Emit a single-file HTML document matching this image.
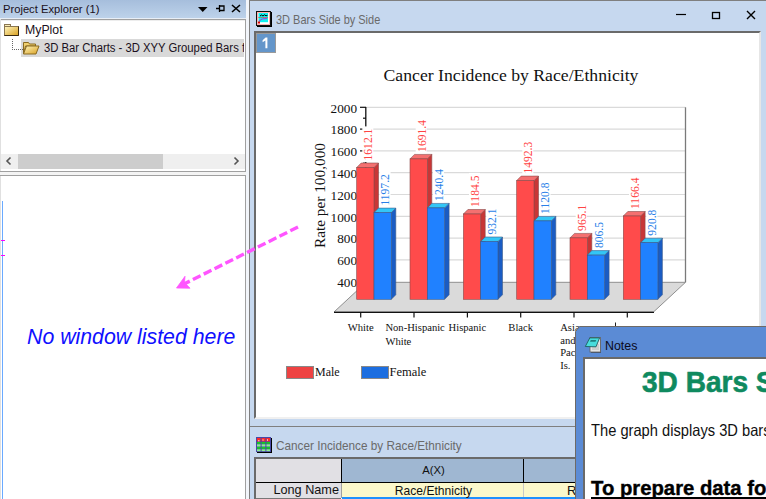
<!DOCTYPE html>
<html><head><meta charset="utf-8">
<style>
*{margin:0;padding:0;box-sizing:border-box}
html,body{width:766px;height:499px;overflow:hidden;background:#fff;font-family:"Liberation Sans",sans-serif;}
.abs{position:absolute}
#pe-title{left:0;top:0;width:246px;height:18px;background:linear-gradient(#a6bedc,#bdd2ea);}
#pe-title span{position:absolute;left:3px;top:3px;font-size:11.2px;color:#1a1020;white-space:nowrap}
.tree{font-size:11.3px;color:#1a1020;white-space:nowrap}
.tl{font-family:"Liberation Serif",serif;font-size:12.5px;fill:#111}
.vl{font-family:"Liberation Serif",serif;font-size:11.6px}
.cl{font-family:"Liberation Serif",serif;font-size:10.6px;fill:#111}
</style></head><body>
<!-- left panel -->
<div class="abs" style="left:0;top:0;width:246px;height:499px;background:#fff"></div>
<div class="abs" id="pe-title"><span>Project Explorer (1)</span></div>
<div class="abs" style="left:0;top:18px;width:246px;height:1px;background:#e8eef6"></div>
<div class="abs" style="left:0;top:19px;width:246px;height:1px;background:#a0a0a0"></div>
<div class="abs" style="left:0;top:20px;width:245px;height:1px;background:#ededed"></div>
<div class="abs" style="left:0;top:19px;width:1px;height:152px;background:#e0e0e0"></div>
<div class="abs" style="left:245px;top:19px;width:1px;height:480px;background:#a0a0a0"></div>
<!-- tree -->
<div class="abs" style="left:21px;top:39px;width:223px;height:18px;background:#d9d9d9"></div>
<div class="abs tree" style="left:25px;top:23px;font-size:12.3px">MyPlot</div>
<div class="abs" style="left:21px;top:39px;width:223px;height:18px;overflow:hidden"><div class="tree" style="position:absolute;left:23px;top:2px;font-size:12px;transform:scaleX(0.94);transform-origin:0 0">3D Bar Charts - 3D XYY Grouped Bars for Ethnicity</div></div>
<svg class="abs" style="left:0;top:0" width="60" height="60">
 <line x1="12.5" y1="39" x2="12.5" y2="50" stroke="#666" stroke-dasharray="1 1"/>
 <line x1="12" y1="49.5" x2="23" y2="49.5" stroke="#666" stroke-dasharray="1 1"/>
 <defs><linearGradient id="fg" x1="0" y1="0" x2="1" y2="1"><stop offset="0" stop-color="#fff6c0"/><stop offset="1" stop-color="#d9a020"/></linearGradient></defs>
 <rect x="4.5" y="24.5" width="6" height="2" fill="#fbeeb8" stroke="#8a7650" stroke-width="1"/><rect x="4.5" y="26.5" width="14" height="9" fill="url(#fg)" stroke="#8a7650" stroke-width="1"/><path d="M4.5,35.5 h14 v-9" fill="none" stroke="#3a2a10" stroke-width="1"/>
 <path d="M23.5,42.5 h5 l1,1.5 h6 v2 h-10 l-2,8 z" fill="#f0d070" stroke="#8a6a20" stroke-width="1"/>
 <path d="M26.5,46 h12.5 l-3,8 h-12.5z" fill="url(#fg)" stroke="#8a6a20" stroke-width="1"/>
</svg>
<!-- scrollbar -->
<div class="abs" style="left:1px;top:154px;width:244px;height:15px;background:#efefef"></div>
<div class="abs" style="left:18px;top:154px;width:145px;height:15px;background:#cdcdcd"></div>
<svg class="abs" style="left:0;top:150px" width="246" height="25">
 <path d="M10.5,7.5 l-3.5,3.5 l3.5,3.5" fill="none" stroke="#555" stroke-width="1.6"/>
 <path d="M234.5,7.5 l3.5,3.5 l-3.5,3.5" fill="none" stroke="#555" stroke-width="1.6"/>
</svg>
<div class="abs" style="left:0;top:171px;width:246px;height:1px;background:#a0a0a0"></div>
<div class="abs" style="left:0;top:172px;width:246px;height:3px;background:#f4f4f4"></div>
<div class="abs" style="left:0;top:175px;width:246px;height:1px;background:#a0a0a0"></div>
<div class="abs" style="left:0;top:176px;width:1px;height:323px;background:#e0e0e0"></div>
<div class="abs" style="left:2px;top:201px;width:1px;height:298px;background:#6aaaff"></div>
<div class="abs" style="left:1px;top:240px;width:4px;height:1px;background:#ff00ff"></div>
<div class="abs" style="left:1px;top:255px;width:4px;height:1px;background:#ff00ff"></div>
<div class="abs" style="left:27px;top:325px;font-size:21.3px;font-style:italic;color:#1010ff;white-space:nowrap">No window listed here</div>
<!-- title icons -->
<svg class="abs" style="left:190px;top:0" width="56" height="18">
 <path d="M8,7 h9.5 l-4.75,5z" fill="#000"/>
 <path d="M26,8.5 h4 M29.5,5 v7 M29.5,6 h4.5 v4.5 h-4.5" fill="none" stroke="#000" stroke-width="1.3"/>
 <path d="M42,5 l8,7 M50,5 l-8,7" stroke="#000" stroke-width="1.6"/>
</svg>
<!-- splitter -->
<div class="abs" style="left:246px;top:0;width:3px;height:499px;background:#f2f5fa"></div>
<!-- graph window -->
<div class="abs" style="left:249px;top:0;width:517px;height:427px;background:#c6d8ef;border-left:1px solid #7f7f7f;border-top:1px solid #7f7f7f;border-bottom:1px solid #7f7f7f"></div>
<div class="abs" style="left:276px;top:12.7px;font-size:12.2px;color:#6a6a6a;white-space:nowrap;transform:scaleX(0.9);transform-origin:0 0">3D Bars Side by Side</div>
<svg class="abs" style="left:255px;top:10px" width="18" height="18">
 <rect x="2" y="2" width="15" height="15" fill="#000"/>
 <rect x="1.5" y="1.5" width="14" height="14" fill="#fff" stroke="#111"/>
 <rect x="2.5" y="2.5" width="12" height="12" fill="none" stroke="#ff6060" stroke-dasharray="1 1"/>
 <rect x="3.5" y="3" width="9.5" height="9.2" fill="#10f0f0"/>
 <path d="M5,6 l1.5,-1 l1.5,1 l1.5,-1.2 l1.5,1 l1.5,-0.5" stroke="#000" fill="none" stroke-width="1"/>
 <path d="M3.5,7.5 h9.5" stroke="#e04040" stroke-dasharray="1.2 0.8"/>
 <path d="M4,11 q3,-3 8,-2.5" stroke="#b030e0" fill="none" stroke-width="1"/>
 <rect x="3" y="11.5" width="2" height="2" fill="#e00000"/>
</svg>
<svg class="abs" style="left:670px;top:5px" width="96" height="22">
 <path d="M6,9.5 h10" stroke="#000" stroke-width="1.2"/>
 <rect x="42.5" y="7.5" width="7" height="6" fill="none" stroke="#000" stroke-width="1.3"/>
 <path d="M77,6 l8,8 M85,6 l-8,8" stroke="#000" stroke-width="1.4"/>
</svg>
<div class="abs" style="left:254px;top:31px;width:507px;height:388px;border-left:2px solid #6a6a6a;border-top:2px solid #6a6a6a;border-right:2px solid #e6e6e6;border-bottom:2px solid #f0f0f0;background:#fff"></div>
<div class="abs" style="left:256px;top:33px;width:20px;height:20px;background:#9a9a9a"></div>
<div class="abs" style="left:257px;top:34px;width:18px;height:18px;background:#6496ca"></div>
<svg class="abs" style="left:256px;top:33px" width="20" height="20"><path d="M6.6,7.2 L9.6,4.6 H11.4 V15.2 H9.4 V7.6 L6.6,9.2 Z" fill="#fff"/></svg>
<svg class="abs" style="left:0;top:0;clip-path:inset(33px 7px 81px 256px)" width="766" height="499">
<text x="511" y="81" text-anchor="middle" style="font-family:'Liberation Serif',serif;font-size:17.7px;fill:#111">Cancer Incidence by Race/Ethnicity</text>
<text transform="translate(325,248) rotate(-90)" style="font-family:'Liberation Serif',serif;font-size:15.3px;fill:#111">Rate per 100,000</text>
<line x1="366" y1="259.9" x2="685.5" y2="259.9" stroke="#dadada" stroke-width="1.2"/>
<line x1="366" y1="238.1" x2="685.5" y2="238.1" stroke="#dadada" stroke-width="1.2"/>
<line x1="366" y1="216.3" x2="685.5" y2="216.3" stroke="#dadada" stroke-width="1.2"/>
<line x1="366" y1="194.5" x2="685.5" y2="194.5" stroke="#dadada" stroke-width="1.2"/>
<line x1="366" y1="172.7" x2="685.5" y2="172.7" stroke="#dadada" stroke-width="1.2"/>
<line x1="366" y1="150.9" x2="685.5" y2="150.9" stroke="#dadada" stroke-width="1.2"/>
<line x1="366" y1="129.1" x2="685.5" y2="129.1" stroke="#dadada" stroke-width="1.2"/>
<line x1="366" y1="107.3" x2="685.5" y2="107.3" stroke="#dadada" stroke-width="1.2"/>
<line x1="685.5" y1="107.3" x2="685.5" y2="282.3" stroke="#7a7a7a" stroke-width="1.3"/>
<polygon points="366,282.3 685.5,282.3 653.5,312 334,312" fill="#dadada" stroke="#777" stroke-width="0.8"/>
<line x1="334" y1="312.3" x2="654" y2="312.3" stroke="#111" stroke-width="1.2"/>
<line x1="365.8" y1="107" x2="365.8" y2="282" stroke="#111" stroke-width="1.3"/>
<line x1="360" y1="281.7" x2="366" y2="281.7" stroke="#111" stroke-width="1.2"/>
<text x="357" y="287.0" text-anchor="end" class="tl" textLength="19.8" lengthAdjust="spacingAndGlyphs">400</text>
<line x1="360" y1="259.9" x2="366" y2="259.9" stroke="#111" stroke-width="1.2"/>
<text x="357" y="265.2" text-anchor="end" class="tl" textLength="19.8" lengthAdjust="spacingAndGlyphs">600</text>
<line x1="360" y1="238.1" x2="366" y2="238.1" stroke="#111" stroke-width="1.2"/>
<text x="357" y="243.4" text-anchor="end" class="tl" textLength="19.8" lengthAdjust="spacingAndGlyphs">800</text>
<line x1="360" y1="216.3" x2="366" y2="216.3" stroke="#111" stroke-width="1.2"/>
<text x="357" y="221.6" text-anchor="end" class="tl" textLength="26.4" lengthAdjust="spacingAndGlyphs">1000</text>
<line x1="360" y1="194.5" x2="366" y2="194.5" stroke="#111" stroke-width="1.2"/>
<text x="357" y="199.8" text-anchor="end" class="tl" textLength="26.4" lengthAdjust="spacingAndGlyphs">1200</text>
<line x1="360" y1="172.7" x2="366" y2="172.7" stroke="#111" stroke-width="1.2"/>
<text x="357" y="178.0" text-anchor="end" class="tl" textLength="26.4" lengthAdjust="spacingAndGlyphs">1400</text>
<line x1="360" y1="150.9" x2="366" y2="150.9" stroke="#111" stroke-width="1.2"/>
<text x="357" y="156.2" text-anchor="end" class="tl" textLength="26.4" lengthAdjust="spacingAndGlyphs">1600</text>
<line x1="360" y1="129.1" x2="366" y2="129.1" stroke="#111" stroke-width="1.2"/>
<text x="357" y="134.4" text-anchor="end" class="tl" textLength="26.4" lengthAdjust="spacingAndGlyphs">1800</text>
<line x1="360" y1="107.3" x2="366" y2="107.3" stroke="#111" stroke-width="1.2"/>
<text x="357" y="112.6" text-anchor="end" class="tl" textLength="26.4" lengthAdjust="spacingAndGlyphs">2000</text>
<line x1="363" y1="270.8" x2="366" y2="270.8" stroke="#111" stroke-width="1.2"/>
<line x1="363" y1="249.0" x2="366" y2="249.0" stroke="#111" stroke-width="1.2"/>
<line x1="363" y1="227.2" x2="366" y2="227.2" stroke="#111" stroke-width="1.2"/>
<line x1="363" y1="205.4" x2="366" y2="205.4" stroke="#111" stroke-width="1.2"/>
<line x1="363" y1="183.6" x2="366" y2="183.6" stroke="#111" stroke-width="1.2"/>
<line x1="363" y1="161.8" x2="366" y2="161.8" stroke="#111" stroke-width="1.2"/>
<line x1="363" y1="140.0" x2="366" y2="140.0" stroke="#111" stroke-width="1.2"/>
<line x1="363" y1="118.2" x2="366" y2="118.2" stroke="#111" stroke-width="1.2"/>
<line x1="360.7" y1="312" x2="360.7" y2="317.5" stroke="#111" stroke-width="1.2"/>
<line x1="414.0" y1="312" x2="414.0" y2="317.5" stroke="#111" stroke-width="1.2"/>
<line x1="467.4" y1="312" x2="467.4" y2="317.5" stroke="#111" stroke-width="1.2"/>
<line x1="520.7" y1="312" x2="520.7" y2="317.5" stroke="#111" stroke-width="1.2"/>
<line x1="574.0" y1="312" x2="574.0" y2="317.5" stroke="#111" stroke-width="1.2"/>
<line x1="627.3" y1="312" x2="627.3" y2="317.5" stroke="#111" stroke-width="1.2"/>
<polygon points="374.0,167.5 378.5,163.0 378.5,294.8 374.0,299.3" fill="#c83636" stroke="#8a4a4a" stroke-width="0.6"/>
<polygon points="356.7,167.5 361.2,163.0 378.5,163.0 374.0,167.5" fill="#f47070" stroke="#8a4a4a" stroke-width="0.6"/>
<rect x="356.7" y="167.5" width="17.3" height="131.8" fill="#ff4b4b" stroke="#8a4a4a" stroke-width="0.6"/>
<polygon points="391.3,212.6 395.8,208.1 395.8,294.8 391.3,299.3" fill="#1a5cc4" stroke="#3a5a8a" stroke-width="0.6"/>
<polygon points="374.0,212.6 378.5,208.1 395.8,208.1 391.3,212.6" fill="#33c6f6" stroke="#3a5a8a" stroke-width="0.6"/>
<rect x="374.0" y="212.6" width="17.3" height="86.7" fill="#2081ff" stroke="#3a5a8a" stroke-width="0.6"/>
<polygon points="427.3,158.9 431.8,154.4 431.8,294.8 427.3,299.3" fill="#c83636" stroke="#8a4a4a" stroke-width="0.6"/>
<polygon points="410.0,158.9 414.5,154.4 431.8,154.4 427.3,158.9" fill="#f47070" stroke="#8a4a4a" stroke-width="0.6"/>
<rect x="410.0" y="158.9" width="17.3" height="140.4" fill="#ff4b4b" stroke="#8a4a4a" stroke-width="0.6"/>
<polygon points="444.6,207.9 449.1,203.4 449.1,294.8 444.6,299.3" fill="#1a5cc4" stroke="#3a5a8a" stroke-width="0.6"/>
<polygon points="427.3,207.9 431.8,203.4 449.1,203.4 444.6,207.9" fill="#33c6f6" stroke="#3a5a8a" stroke-width="0.6"/>
<rect x="427.3" y="207.9" width="17.3" height="91.4" fill="#2081ff" stroke="#3a5a8a" stroke-width="0.6"/>
<polygon points="480.7,214.0 485.2,209.5 485.2,294.8 480.7,299.3" fill="#c83636" stroke="#8a4a4a" stroke-width="0.6"/>
<polygon points="463.4,214.0 467.9,209.5 485.2,209.5 480.7,214.0" fill="#f47070" stroke="#8a4a4a" stroke-width="0.6"/>
<rect x="463.4" y="214.0" width="17.3" height="85.3" fill="#ff4b4b" stroke="#8a4a4a" stroke-width="0.6"/>
<polygon points="498.0,241.5 502.5,237.0 502.5,294.8 498.0,299.3" fill="#1a5cc4" stroke="#3a5a8a" stroke-width="0.6"/>
<polygon points="480.7,241.5 485.2,237.0 502.5,237.0 498.0,241.5" fill="#33c6f6" stroke="#3a5a8a" stroke-width="0.6"/>
<rect x="480.7" y="241.5" width="17.3" height="57.8" fill="#2081ff" stroke="#3a5a8a" stroke-width="0.6"/>
<polygon points="534.0,180.6 538.5,176.1 538.5,294.8 534.0,299.3" fill="#c83636" stroke="#8a4a4a" stroke-width="0.6"/>
<polygon points="516.7,180.6 521.2,176.1 538.5,176.1 534.0,180.6" fill="#f47070" stroke="#8a4a4a" stroke-width="0.6"/>
<rect x="516.7" y="180.6" width="17.3" height="118.7" fill="#ff4b4b" stroke="#8a4a4a" stroke-width="0.6"/>
<polygon points="551.3,220.9 555.8,216.4 555.8,294.8 551.3,299.3" fill="#1a5cc4" stroke="#3a5a8a" stroke-width="0.6"/>
<polygon points="534.0,220.9 538.5,216.4 555.8,216.4 551.3,220.9" fill="#33c6f6" stroke="#3a5a8a" stroke-width="0.6"/>
<rect x="534.0" y="220.9" width="17.3" height="78.4" fill="#2081ff" stroke="#3a5a8a" stroke-width="0.6"/>
<polygon points="587.3,237.9 591.8,233.4 591.8,294.8 587.3,299.3" fill="#c83636" stroke="#8a4a4a" stroke-width="0.6"/>
<polygon points="570.0,237.9 574.5,233.4 591.8,233.4 587.3,237.9" fill="#f47070" stroke="#8a4a4a" stroke-width="0.6"/>
<rect x="570.0" y="237.9" width="17.3" height="61.4" fill="#ff4b4b" stroke="#8a4a4a" stroke-width="0.6"/>
<polygon points="604.6,255.1 609.1,250.6 609.1,294.8 604.6,299.3" fill="#1a5cc4" stroke="#3a5a8a" stroke-width="0.6"/>
<polygon points="587.3,255.1 591.8,250.6 609.1,250.6 604.6,255.1" fill="#33c6f6" stroke="#3a5a8a" stroke-width="0.6"/>
<rect x="587.3" y="255.1" width="17.3" height="44.2" fill="#2081ff" stroke="#3a5a8a" stroke-width="0.6"/>
<polygon points="640.6,216.0 645.1,211.5 645.1,294.8 640.6,299.3" fill="#c83636" stroke="#8a4a4a" stroke-width="0.6"/>
<polygon points="623.3,216.0 627.8,211.5 645.1,211.5 640.6,216.0" fill="#f47070" stroke="#8a4a4a" stroke-width="0.6"/>
<rect x="623.3" y="216.0" width="17.3" height="83.3" fill="#ff4b4b" stroke="#8a4a4a" stroke-width="0.6"/>
<polygon points="657.9,242.7 662.4,238.2 662.4,294.8 657.9,299.3" fill="#1a5cc4" stroke="#3a5a8a" stroke-width="0.6"/>
<polygon points="640.6,242.7 645.1,238.2 662.4,238.2 657.9,242.7" fill="#33c6f6" stroke="#3a5a8a" stroke-width="0.6"/>
<rect x="640.6" y="242.7" width="17.3" height="56.6" fill="#2081ff" stroke="#3a5a8a" stroke-width="0.6"/>
<g transform="translate(372.1,160.5) rotate(-90)"><rect x="-1.5" y="-9.8" width="35.6" height="11" fill="#fff"/><text class="vl" fill="#ff4444">1612.1</text></g>
<g transform="translate(389.4,205.6) rotate(-90)"><rect x="-1.5" y="-9.8" width="35.6" height="11" fill="#fff"/><text class="vl" fill="#2a7fe8">1197.2</text></g>
<g transform="translate(425.5,151.9) rotate(-90)"><rect x="-1.5" y="-9.8" width="35.6" height="11" fill="#fff"/><text class="vl" fill="#ff4444">1691.4</text></g>
<g transform="translate(442.8,200.9) rotate(-90)"><rect x="-1.5" y="-9.8" width="35.6" height="11" fill="#fff"/><text class="vl" fill="#2a7fe8">1240.4</text></g>
<g transform="translate(478.8,207.0) rotate(-90)"><rect x="-1.5" y="-9.8" width="35.6" height="11" fill="#fff"/><text class="vl" fill="#ff4444">1184.5</text></g>
<g transform="translate(496.1,234.5) rotate(-90)"><rect x="-1.5" y="-9.8" width="30.0" height="11" fill="#fff"/><text class="vl" fill="#2a7fe8">932.1</text></g>
<g transform="translate(532.1,173.6) rotate(-90)"><rect x="-1.5" y="-9.8" width="35.6" height="11" fill="#fff"/><text class="vl" fill="#ff4444">1492.3</text></g>
<g transform="translate(549.4,213.9) rotate(-90)"><rect x="-1.5" y="-9.8" width="35.6" height="11" fill="#fff"/><text class="vl" fill="#2a7fe8">1120.8</text></g>
<g transform="translate(585.5,230.9) rotate(-90)"><rect x="-1.5" y="-9.8" width="30.0" height="11" fill="#fff"/><text class="vl" fill="#ff4444">965.1</text></g>
<g transform="translate(602.8,248.1) rotate(-90)"><rect x="-1.5" y="-9.8" width="30.0" height="11" fill="#fff"/><text class="vl" fill="#2a7fe8">806.5</text></g>
<g transform="translate(638.8,209.0) rotate(-90)"><rect x="-1.5" y="-9.8" width="35.6" height="11" fill="#fff"/><text class="vl" fill="#ff4444">1166.4</text></g>
<g transform="translate(656.1,235.7) rotate(-90)"><rect x="-1.5" y="-9.8" width="30.0" height="11" fill="#fff"/><text class="vl" fill="#2a7fe8">920.8</text></g>
<text class="cl" x="360.7" y="331" text-anchor="middle">White</text>

<text class="cl" x="467.4" y="331" text-anchor="middle">Hispanic</text>
<text class="cl" x="520.7" y="331" text-anchor="middle">Black</text>



<text class="cl" x="385.4" y="331">Non-Hispanic</text>
<text class="cl" x="385.4" y="344.5">White</text>
<text class="cl" x="560.2" y="331">Asian</text>
<text class="cl" x="560.2" y="343.7">and</text>
<text class="cl" x="560.2" y="356.4">Pacific</text>
<text class="cl" x="560.2" y="369">Is.</text>
<line x1="615.5" y1="322.5" x2="615.5" y2="327" stroke="#222" stroke-width="1"/>
<rect x="286.5" y="366.5" width="27" height="12" fill="#ee4242" stroke="#888" stroke-width="1"/>
<rect x="361.5" y="366.5" width="27" height="12" fill="#1c6ee0" stroke="#888" stroke-width="1"/>
<text class="cl" style="font-size:12px" x="315" y="376">Male</text>
<text class="cl" style="font-size:12.5px" x="389.5" y="376">Female</text>
</svg>
<!-- workbook window -->
<div class="abs" style="left:249px;top:427px;width:517px;height:72px;background:#c6d8ef;border-left:1px solid #7f7f7f"></div>
<svg class="abs" style="left:255px;top:436px" width="18" height="18">
 <rect x="2" y="2" width="15" height="15" fill="#000"/>
 <rect x="1" y="1" width="15" height="15" fill="#4848a8"/>
 <g fill="#ff2828"><rect x="2" y="2" width="3.6" height="3.4"/><rect x="6.6" y="2" width="3.8" height="3.4"/><rect x="11.4" y="2" width="3.6" height="3.4"/></g>
 <g fill="#fff" opacity="0.6"><rect x="3" y="4" width="1.5" height="1.4"/><rect x="7.5" y="3" width="1" height="2"/><rect x="12" y="3" width="1" height="2"/></g>
 <g fill="#10d020"><rect x="2" y="6" width="3.6" height="1.8"/><rect x="6.6" y="6" width="3.8" height="1.8"/><rect x="11.4" y="6" width="3.6" height="1.8"/>
 <rect x="2" y="11" width="3.6" height="1.8"/><rect x="6.6" y="11" width="3.8" height="1.8"/><rect x="11.4" y="11" width="3.6" height="1.8"/></g>
 <g fill="#90f090"><rect x="2" y="8.3" width="3.6" height="2.2"/><rect x="6.6" y="8.3" width="3.8" height="2.2"/><rect x="11.4" y="8.3" width="3.6" height="2.2"/>
 <rect x="2" y="13.3" width="3.6" height="1.9"/><rect x="6.6" y="13.3" width="3.8" height="1.9"/><rect x="11.4" y="13.3" width="3.6" height="1.9"/></g>
</svg>
<div class="abs" style="left:276px;top:439px;font-size:12.2px;color:#6a6a6a;white-space:nowrap;transform:scaleX(0.965);transform-origin:0 0">Cancer Incidence by Race/Ethnicity</div>
<div class="abs" style="left:254px;top:457px;width:512px;height:42px;background:#fff;border-top:2px solid #6a6a6a;border-left:2px solid #6a6a6a"></div>
<div class="abs" style="left:256px;top:459px;width:85px;height:23px;background:#e1e0e4"></div>
<div class="abs" style="left:342px;top:459px;width:181px;height:23px;background:#9fb7d2"></div>
<div class="abs" style="left:524px;top:459px;width:242px;height:23px;background:#9fb7d2"></div>
<div class="abs" style="left:341px;top:459px;width:1px;height:24px;background:#000"></div>
<div class="abs" style="left:523px;top:459px;width:1px;height:24px;background:#000"></div>
<div class="abs" style="left:256px;top:482px;width:510px;height:1px;background:#000"></div>
<div class="abs" style="left:256px;top:483px;width:85px;height:15px;background:#e1e0e4"></div>
<div class="abs" style="left:342px;top:483px;width:424px;height:15px;background:#fbf8cb"></div>
<div class="abs" style="left:523px;top:483px;width:1px;height:15px;background:#c8c8c8"></div>
<div class="abs" style="left:341px;top:483px;width:1px;height:15px;background:#a0a0a0"></div>
<div class="abs" style="left:342px;top:497px;width:424px;height:2px;background:#1e90ff"></div>
<div class="abs" style="left:256px;top:498px;width:85px;height:1px;background:#777"></div>
<div class="abs" style="left:343px;top:463.5px;width:181px;font-size:11.3px;color:#111;text-align:center">A(X)</div>
<div class="abs" style="left:256px;top:483px;width:83px;font-size:12.7px;color:#111;text-align:right">Long Name</div>
<div class="abs" style="left:343px;top:483.5px;width:181px;font-size:12.1px;color:#111;text-align:center">Race/Ethnicity</div>
<div class="abs" style="left:567px;top:483px;font-size:13px;color:#111">R</div>
<!-- notes window -->
<svg class="abs" style="left:574px;top:325px" width="192" height="174"><path d="M1.5,175 V6.5 L5.5,1.5 H200 V175 Z" fill="#5b8bd5"/><path d="M1.5,175 V6.5 L5.5,1.5 H200" fill="none" stroke="#6e6a66" stroke-width="1"/></svg>
<svg class="abs" style="left:584px;top:336px" width="18" height="18">
 <rect x="7" y="2.5" width="10" height="14.5" fill="#333" opacity="0.6"/>
 <rect x="6" y="1.5" width="10.5" height="14.5" fill="#e4e4e4" stroke="#606060" stroke-width="0.8"/>
 <path d="M8,9 h7 M8,11 h7 M8,13 h7" stroke="#a8a8a8" stroke-width="0.8"/>
 <path d="M1.3,10.5 L5.8,1.9 H15.6 L12,10.8 Z" fill="#48dcdc" stroke="#1e6060" stroke-width="0.9"/>
 <path d="M6.8,4 H12.2 L11.5,5.8 H6 Z" fill="#1f8080"/>
</svg>
<div class="abs" style="left:605px;top:339px;font-size:12.4px;color:#0a0a20;white-space:nowrap">Notes</div>
<div class="abs" style="left:583px;top:357px;width:190px;height:150px;background:#fff;border-left:2px solid #6a6a6a;border-top:2px solid #6a6a6a"></div>
<div class="abs" style="left:642px;top:365px;font-size:30px;font-weight:bold;color:#0f8a5f;white-space:nowrap;-webkit-text-stroke:0.6px #0f8a5f;transform:scaleX(0.935);transform-origin:0 0">3D Bars Side by Side</div>
<div class="abs" style="left:591px;top:421px;font-size:16.5px;color:#111;white-space:nowrap;transform:scaleX(0.89);transform-origin:0 0">The graph displays 3D bars side by side</div>
<div class="abs" style="left:591px;top:477px;font-size:20.3px;font-weight:bold;color:#000;white-space:nowrap;-webkit-text-stroke:0.4px #000;text-decoration:underline;text-decoration-skip-ink:none">To prepare data for the graph</div>
<!-- arrow -->
<svg class="abs" style="left:0;top:0" width="766" height="499">
 <line x1="298" y1="227" x2="182" y2="285" stroke="#ff55ff" stroke-width="3.4" stroke-dasharray="8.6 3.5"/>
 <path d="M176.5,288 L185,276.3 L184.5,282.5 L190,288.2 Z" fill="#ff55ff" stroke="#ff55ff" stroke-width="0.8" stroke-linejoin="round"/>
</svg>
</body></html>
